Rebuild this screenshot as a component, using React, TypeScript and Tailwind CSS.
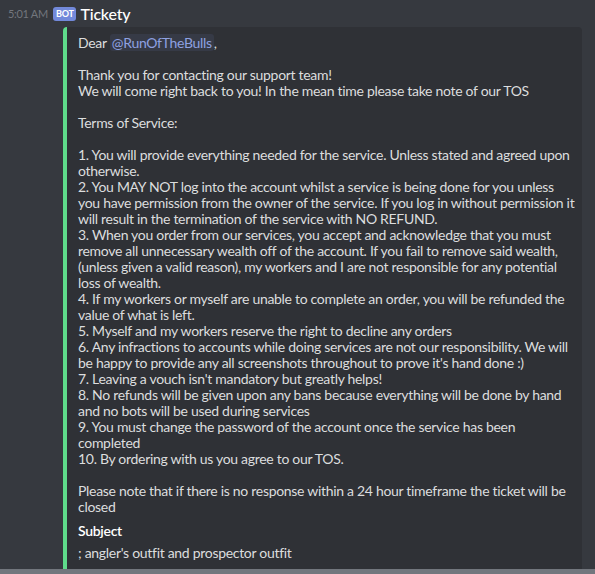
import React from "react";

const terms = [
  "1. You will provide everything needed for the service. Unless stated and agreed upon otherwise.",
  "2. You MAY NOT log into the account whilst a service is being done for you unless you have permission from the owner of the service. If you log in without permission it will result in the termination of the service with NO REFUND.",
  "3. When you order from our services, you accept and acknowledge that you must remove all unnecessary wealth off of the account. If you fail to remove said wealth, (unless given a valid reason), my workers and I are not responsible for any potential loss of wealth.",
  "4. If my workers or myself are unable to complete an order, you will be refunded the value of what is left.",
  "5. Myself and my workers reserve the right to decline any orders",
  "6. Any infractions to accounts while doing services are not our responsibility. We will be happy to provide any all screenshots throughout to prove it's hand done :)",
  "7. Leaving a vouch isn't mandatory but greatly helps!",
  "8. No refunds will be given upon any bans because everything will be done by hand and no bots will be used during services",
  "9. You must change the password of the account once the service has been completed",
  "10. By ordering with us you agree to our TOS.",
];

const MessageHeader = () => (
  <div className="flex h-[27px] items-center pl-2">
    <span className="w-[45px] text-[11px] text-[#72767d]">5:01 AM</span>
    <span className="flex h-[14px] items-center rounded-[3px] bg-[#7289da] px-[3px] text-[9px] font-bold leading-none text-white">
      BOT
    </span>
    <span className="ml-[4px] text-[16px] font-medium tracking-[-0.2px] text-white">Tickety</span>
  </div>
);

export default function App() {
  return (
    <div className="flex h-[574px] w-[595px] flex-col overflow-hidden bg-[#36393f] font-['Lato',sans-serif] text-[14px] leading-[16px] tracking-[-0.3px] text-[#dcddde]">
      <div className="flex-1 overflow-hidden">
        <MessageHeader />
        <div className="ml-[63px] mr-[13px] flex rounded-[4px] bg-[#2f3136]">
          <div className="w-[4px] shrink-0 rounded-l-[4px] bg-[#5fdc8b]" />
          <div className="pb-4 pl-[11px] pr-[7px] pt-2">
            <div className="whitespace-pre-line">
              Dear{" "}
              <span className="rounded-[3px] bg-[#7289da1a] px-[2px] text-[#8ea1e1]">
                @RunOfTheBulls
              </span>
              ,{"\n\n"}
              Thank you for contacting our support team!{"\n"}
              We will come right back to you! In the mean time please take note of our TOS
              {"\n\n"}
              Terms of Service:{"\n\n"}
              {terms.join("\n")}
              {"\n\n"}
              Please note that if there is no response within a 24 hour timeframe the ticket will be closed
            </div>
            <div className="mt-[7px]">
              <div className="font-semibold leading-[18px] text-white">Subject</div>
              <div className="mt-[5px]">; angler's outfit and prospector outfit</div>
            </div>
          </div>
        </div>
      </div>
      <div className="h-[5px] bg-[#72767d]" />
    </div>
  );
}
